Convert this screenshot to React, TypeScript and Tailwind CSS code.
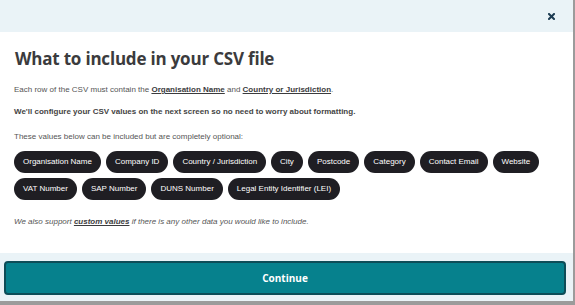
const pillsRow1 = [
  "Organisation Name",
  "Company ID",
  "Country / Jurisdiction",
  "City",
  "Postcode",
  "Category",
  "Contact Email",
  "Website",
];

const pillsRow2 = ["VAT Number", "SAP Number", "DUNS Number", "Legal Entity Identifier (LEI)"];

function Pill({ label }: { label: string }) {
  return (
    <span className="flex h-[22px] items-center rounded-full bg-[#1f1e23] px-[9px] text-[8px] text-white">
      {label}
    </span>
  );
}

export default function App() {
  return (
    <div className="flex h-[305px] w-[575px] flex-col overflow-hidden border-r-2 border-b-[4px] border-[#9b9b9b] bg-white font-['Liberation_Sans',Arial,sans-serif]">
      {/* Header */}
      <div className="flex h-[32px] shrink-0 items-center justify-end bg-[#eaf3f7] pr-[14px]">
        <button className="flex h-4 w-4 items-center justify-center text-[#1c3b52]">
          <svg width="7" height="7" viewBox="0 0 7 7">
            <path d="M1 1 L6 6 M6 1 L1 6" stroke="currentColor" strokeWidth="2" strokeLinecap="square" />
          </svg>
        </button>
      </div>

      {/* Body */}
      <div className="flex-1 px-[14px] text-[#555]">
        <h2 className="mt-[16px] pl-px font-['Open_Sans',sans-serif] text-[17px] font-bold leading-[22px] tracking-[-0.2px] text-[#3b3b3d]">
          What to include in your CSV file
        </h2>
        <p className="mt-[14px] text-[8px] leading-[12px]">
          Each row of the CSV must contain the{" "}
          <span className="font-bold text-[#3b3b3d] underline">Organisation Name</span> and{" "}
          <span className="font-bold text-[#3b3b3d] underline">Country or Jurisdiction</span>.
        </p>
        <p className="mt-[10px] text-[8px] font-bold leading-[12px] text-[#444]">
          We'll configure your CSV values on the next screen so no need to worry about formatting.
        </p>
        <p className="mt-[13px] text-[8px] leading-[12px]">
          These values below can be included but are completely optional:
        </p>
        <div className="mt-[8px] flex flex-col gap-[5px]">
          <div className="flex gap-[5px]">
            {pillsRow1.map((p) => (
              <Pill key={p} label={p} />
            ))}
          </div>
          <div className="flex gap-[5px]">
            {pillsRow2.map((p) => (
              <Pill key={p} label={p} />
            ))}
          </div>
        </div>
        <p className="mt-[16px] text-[8px] italic leading-[12px]">
          We also support <span className="font-bold text-[#3b3b3d] underline">custom values</span> if
          there is any other data you would like to include.
        </p>
      </div>

      {/* Footer */}
      <div className="h-[48px] shrink-0 bg-[#eaf3f7] pt-[8px] pl-[4px] pr-[7px]">
        <button className="flex h-[34px] w-full items-center justify-center rounded-[4px] border-2 border-[#0d4d58] bg-[#06818d] font-['Open_Sans',sans-serif] text-[10px] font-bold text-white">
          Continue
        </button>
      </div>
    </div>
  );
}
